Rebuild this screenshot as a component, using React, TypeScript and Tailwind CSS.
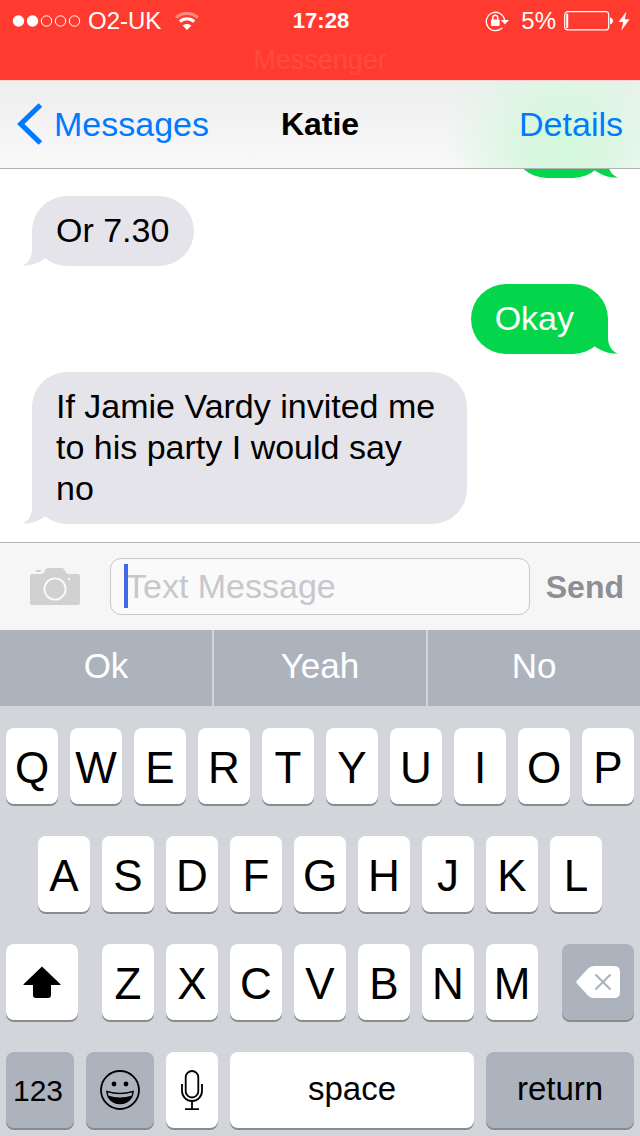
import { useState } from "react"
import type { ReactNode } from "react"
import clsx from "clsx"

interface Message {
  id: number
  text: string
  outgoing?: boolean
}

const messages: Message[] = [
  { id: 1, text: "", outgoing: true },
  { id: 2, text: "Or 7.30" },
  { id: 3, text: "Okay", outgoing: true },
  { id: 4, text: "If Jamie Vardy invited me to his party I would say no" },
]

const suggestions = ["Ok", "Yeah", "No"]

function StatusBar() {
  return (
    <div className="h-20 shrink-0 bg-[#ff3b30] text-white">
      <div className="grid h-[42px] grid-cols-[1fr_auto_1fr] items-center pl-3 pr-2.5">
        <div className="flex items-center">
          <svg className="h-3 w-[70px]" viewBox="0 0 70 12" fill="none" stroke="#fff" aria-label="Signal">
            <circle cx="6.5" cy="6" r="5.7" fill="#fff" stroke="none" />
            <circle cx="20.5" cy="6" r="5.7" fill="#fff" stroke="none" />
            <circle cx="34.5" cy="6" r="5.2" />
            <circle cx="48.5" cy="6" r="5.2" />
            <circle cx="62.5" cy="6" r="5.2" />
          </svg>
          <span className="ml-1.5 text-2xl leading-7">O2-UK</span>
          <svg className="ml-3.5 h-[18px] w-6" viewBox="0 0 24 18" fill="none" stroke="#fff" aria-label="Wi-Fi">
            <path d="M1 5.6C7 0 17 0 23 5.6" strokeWidth="3" opacity="0.4" />
            <path d="M4.8 9.6C9 5.7 15 5.7 19.2 9.6" strokeWidth="3" />
            <path d="M12 18L7.6 13.6C10 11.5 14 11.5 16.4 13.6Z" fill="#fff" stroke="none" />
          </svg>
        </div>

        <span className="text-[22px] font-bold leading-7">17:28</span>

        <div className="flex items-center justify-end">
          <svg className="h-[22px] w-6" viewBox="0 0 24 22" fill="none" stroke="#fff" aria-label="Rotation lock">
            <path d="M17.4 17.6A9.2 9.2 0 1 1 19.6 10" strokeWidth="1.3" />
            <path d="M15.8 10H24L19.8 14.6Z" fill="#fff" stroke="none" />
            <rect x="6" y="9.5" width="8.6" height="6.5" rx="0.8" fill="#fff" stroke="none" />
            <path d="M7.8 10V8A2.5 2.8 0 0 1 12.8 8V10" strokeWidth="1.4" />
          </svg>
          <span className="ml-3 text-2xl leading-7">5%</span>
          <svg className="ml-2 h-5 w-[50px]" viewBox="0 0 50 20" fill="none" aria-label="Battery">
            <rect x="0.7" y="0.7" width="44" height="18.2" rx="3" stroke="#fff" strokeWidth="1.2" />
            <rect x="2.2" y="2.6" width="2" height="14.6" rx="0.6" fill="#fff" />
            <path d="M46 6.5C50 7 50 12.8 46 13.3Z" fill="#fff" />
          </svg>
          <svg className="ml-1 h-5 w-3" viewBox="0 0 12 20" fill="#fff" aria-label="Charging">
            <path d="M8.4 0.5L0.6 11H5.2L3.4 19.5L11.6 8.2H6.8Z" />
          </svg>
        </div>
      </div>
      <p className="pt-0.5 text-center text-[27px] leading-8 text-[#ff4a3f]">Messenger</p>
    </div>
  )
}

function NavBar() {
  return (
    <header className="grid h-[89px] shrink-0 grid-cols-[1fr_auto_1fr] items-center border-b border-t border-b-[#b2b2b2] border-t-[#fbd6d3] bg-[radial-gradient(ellipse_120px_110px_at_88%_68%,#d3f9db_0%,#dcf6e2_40%,transparent_100%),linear-gradient(#eeeeef,#f9f9f9)] px-[17px] pb-0.5">
      <button type="button" className="flex items-center text-[34px] leading-10 text-[#007aff]">
        <svg className="mr-[11px] h-[42px] w-[26px]" viewBox="0 0 26 42" fill="none" stroke="currentColor" strokeWidth="5.2" aria-hidden="true">
          <path d="M23.4 2L3.8 21L23.4 40" />
        </svg>
        Messages
      </button>
      <h1 className="text-[32px] font-bold leading-10 text-black">Katie</h1>
      <button type="button" className="justify-self-end text-[34px] leading-10 text-[#007aff]">
        Details
      </button>
    </header>
  )
}

function Bubble({ text, outgoing }: { text: string; outgoing?: boolean }) {
  return (
    <div
      className={clsx(
        "relative min-h-[70px] min-w-24 max-w-[435px] shrink-0 rounded-[35px] pb-[15px] pl-6 pt-3.5 text-[34px] leading-[41px]",
        outgoing ? "self-end bg-[#04d64b] pr-[34px] text-white" : "self-start bg-[#e5e4eb] pr-[25px] text-black"
      )}
    >
      {text}
      <svg
        className={clsx(
          "absolute bottom-0 h-9 w-6",
          outgoing ? "-right-2.5 -scale-x-100 fill-[#04d64b]" : "-left-2.5 fill-[#e5e4eb]"
        )}
        viewBox="0 0 24 36"
        aria-hidden="true"
      >
        <path d="M10 0V19C10 27 7 33 0 35.500C9 36 17 33 23 28.500L24 6Z" />
      </svg>
    </div>
  )
}

function Composer() {
  const [draft, setDraft] = useState("")

  return (
    <form
      className="flex shrink-0 items-center border-t border-[#b2b2b2] bg-[#f6f6f7] py-[15px] pl-[30px] pr-4"
      onSubmit={(e) => e.preventDefault()}
    >
      <button type="button" aria-label="Camera">
        <svg className="h-[38px] w-[50px]" viewBox="0 0 50 38" aria-hidden="true">
          <path
            d="M2 6H11C13.500 6 14 4.500 15 2.500C15.700 1 16.500 0 18.500 0H31.500C33.500 0 34.300 1 35 2.500C36 4.500 36.500 6 39 6H48Q50 6 50 8V35Q50 37 48 37H2Q0 37 0 35V8Q0 6 2 6Z"
            fill="#d1d1d2"
          />
          <rect x="5.500" y="2" width="5.500" height="2" rx="1" fill="#d1d1d2" />
          <circle cx="25" cy="21" r="10.600" fill="none" stroke="#fafafa" strokeWidth="1.800" />
          <circle cx="39" cy="11" r="1.200" fill="#fafafa" />
        </svg>
      </button>
      <div className="relative ml-[30px] min-w-0 flex-1">
        <input
          type="text"
          aria-label="Text Message"
          placeholder="Text Message"
          value={draft}
          onChange={(e) => setDraft(e.target.value)}
          className="block h-[57px] w-full rounded-[11px] border border-[#c8c8cd] bg-[#fafafb] pl-[15px] pr-3 text-[34px] text-black caret-[#4169e8] outline-none placeholder:text-[#c7c7cc]"
        />
        {!draft && <span className="absolute left-3.5 top-1.5 h-11 w-1 bg-[#4169e8]" />}
      </div>
      <button type="submit" className="ml-4 text-[32px] font-bold leading-10 text-[#8e8e93]">
        Send
      </button>
    </form>
  )
}

interface KeyProps {
  children: ReactNode
  label?: string
  className?: string
  dark?: boolean
}

function Key({ children, label, className = "flex-1 pt-1 text-[44px]", dark }: KeyProps) {
  return (
    <button
      type="button"
      aria-label={label}
      className={clsx(
        "flex h-[76px] min-w-0 items-center justify-center rounded-lg leading-none text-black shadow-[0_2px_0_#898b8f]",
        dark ? "bg-[#adb3bd]" : "bg-white",
        className
      )}
    >
      {children}
    </button>
  )
}

function Letters({ keys }: { keys: string }) {
  return (
    <>
      {keys.split("").map((letter) => (
        <Key key={letter}>{letter}</Key>
      ))}
    </>
  )
}

function Keyboard() {
  return (
    <div className="shrink-0 bg-[#d2d5da]">
      <div className="grid grid-cols-3 gap-0.5">
        {suggestions.map((word) => (
          <button key={word} type="button" className="h-[76px] bg-[#adb3bd] pb-1 text-[35px] text-white">
            {word}
          </button>
        ))}
      </div>

      <div className="flex flex-col gap-8 px-1.5 pb-2 pt-[22px]">
        <div className="flex gap-3">
          <Letters keys="QWERTYUIOP" />
        </div>

        <div className="flex gap-3 px-8">
          <Letters keys="ASDFGHJKL" />
        </div>

        <div className="flex gap-6">
          <Key label="Shift" className="w-[72px]">
            <svg className="h-8 w-[38px]" viewBox="0 0 38 32" aria-hidden="true">
              <path d="M19 0.500L37.500 18.200Q38 19 37 19H28V29Q28 32 25 32H13Q10 32 10 29V19H1Q0 19 0.500 18.200Z" />
            </svg>
          </Key>
          <div className="flex flex-1 gap-3">
            <Letters keys="ZXCVBNM" />
          </div>
          <Key label="Delete" className="w-[72px]" dark>
            <svg className="h-8 w-11" viewBox="0 0 44 32" aria-hidden="true">
              <path d="M0.600 15Q0 16 0.600 17L12 29.500Q14.500 32 18 32H38Q44 32 44 26V6Q44 0 38 0H18Q14.500 0 12 2.500Z" fill="#fff" />
              <path d="M19.500 8.500L34.500 23.500M34.500 8.500L19.500 23.500" stroke="#adb3bd" strokeWidth="2.200" />
            </svg>
          </Key>
        </div>

        <div className="flex gap-3">
          <Key className="w-[68px] pr-1 pt-0.5 text-3xl" dark>
            123
          </Key>
          <Key label="Emoji" className="w-[68px]" dark>
            <svg className="size-10" viewBox="0 0 40 40" aria-hidden="true">
              <circle cx="20" cy="20" r="19" fill="none" stroke="#000" strokeWidth="1.800" />
              <circle cx="14" cy="14" r="2.400" />
              <circle cx="26" cy="14" r="2.400" />
              <path d="M6.800 21.500C15 24 25 24 33.200 21.500C32.500 29 27 33.500 20 33.500C13 33.500 7.500 29 6.800 21.500Z" fill="none" stroke="#000" strokeWidth="1.400" />
              <path d="M7.800 25.500C16 28 24 28 32.200 25.500C30 31.500 25.500 34 20 34C14.500 34 10 31.500 7.800 25.500Z" />
            </svg>
          </Key>
          <Key label="Dictate" className="w-[52px]">
            <svg className="h-10 w-[22px]" viewBox="0 0 22 40" fill="none" stroke="#000" strokeWidth="1.800" aria-hidden="true">
              <rect x="4.700" y="1" width="12.600" height="26.500" rx="6.300" />
              <path d="M1 14V21A10 10 0 0 0 21 21V14M11 31V39.200M4 39.200H18" />
            </svg>
          </Key>
          <Key className="flex-1 pb-1 text-[33px]">space</Key>
          <Key className="w-[148px] pb-1 text-[33px]" dark>
            return
          </Key>
        </div>
      </div>
    </div>
  )
}

export default function App() {
  return (
    <div className="flex h-screen flex-col overflow-hidden bg-white font-['Liberation_Sans',Arial,sans-serif]">
      <StatusBar />
      <NavBar />
      <main className="flex min-h-0 flex-1 flex-col justify-end gap-[18px] overflow-hidden px-8 pb-[18px]">
        {messages.map((m) => (
          <Bubble key={m.id} text={m.text} outgoing={m.outgoing} />
        ))}
      </main>
      <Composer />
      <Keyboard />
    </div>
  )
}
